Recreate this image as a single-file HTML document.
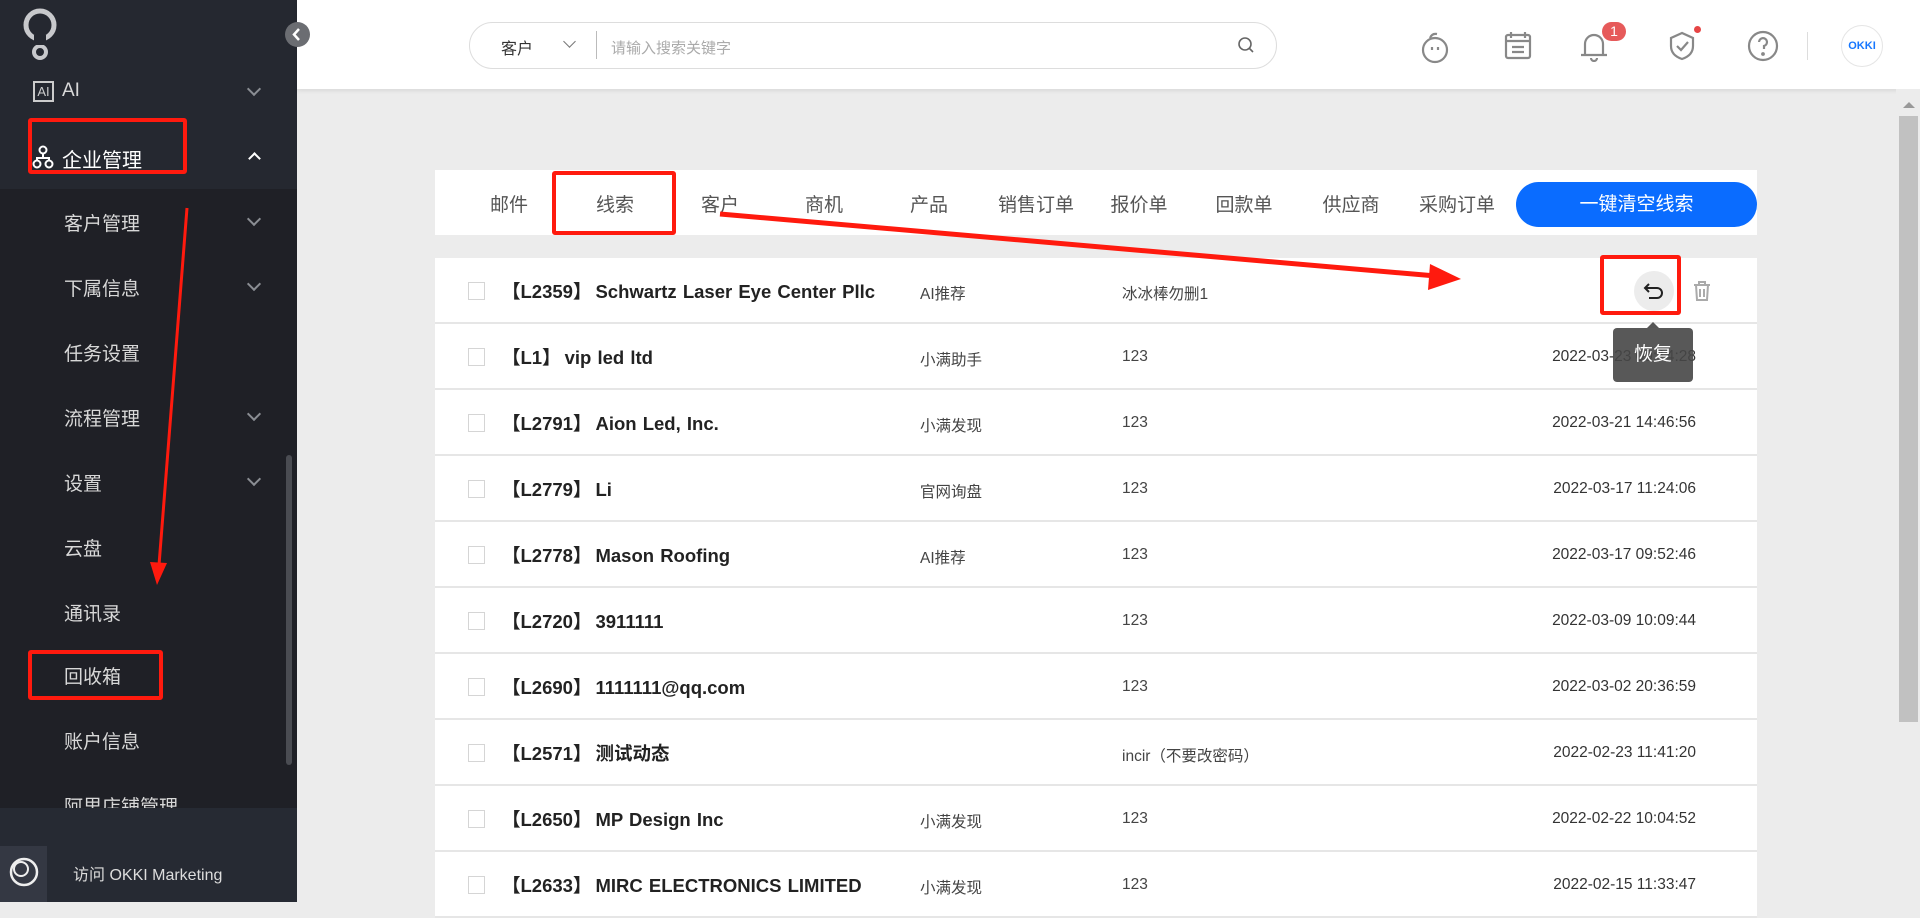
<!DOCTYPE html>
<html><head><meta charset="utf-8"><style>
*{margin:0;padding:0;box-sizing:border-box}
body{width:1920px;height:902px;overflow:hidden;background:#ececec;font-family:"Liberation Sans","Noto Sans CJK SC",sans-serif;position:relative}
.abs{position:absolute}
#side{left:0;top:0;width:297px;height:902px;background:#252830}
#sub{left:0;top:189px;width:297px;height:620px;background:#1f2026}
.mi{position:absolute;color:#d8d8d8;font-size:19px}
.chev{position:absolute;left:249px;width:10px;height:10px;border-right:2px solid #8a8d93;border-bottom:2px solid #8a8d93;transform:rotate(45deg)}
#bottom{left:0;top:808px;width:297px;height:94px;background:#262a33}
#header{left:297px;top:0;width:1623px;height:89px;background:#fff;box-shadow:0 2px 4px rgba(0,0,0,.08)}
.tab{position:absolute;top:190px;font-size:19px;color:#555;transform:translateX(-50%)}
.row{position:absolute;left:435px;width:1322px;height:66px;background:#fff;border-bottom:2px solid #e6e6e6}
.row .cb{position:absolute;left:33px;top:24px;width:17px;height:18px;border:1px solid #d5d5d5;background:#fff}
.row .nm{position:absolute;left:67px;top:20px;font-size:18.5px;font-weight:bold;color:#222;white-space:nowrap;word-spacing:1px}
.row .nm b{margin-right:4px}
.row .src{position:absolute;left:485px;top:24px;font-size:15.5px;color:#444}
.row .own{position:absolute;left:687px;top:24px;font-size:15.5px;color:#444}
.row .dt{position:absolute;right:61px;top:24px;font-size:15.5px;color:#333}
.red{position:absolute;border:4px solid #ff1a0e;border-radius:3px}
</style></head><body>
<div id="side" class="abs"></div>
<div id="sub" class="abs"></div>
<svg class="abs" style="left:20px;top:8px" width="40" height="56"><circle cx="20" cy="17" r="14" fill="none" stroke="#c8c9cc" stroke-width="5"/><circle cx="20" cy="44" r="6" fill="none" stroke="#c8c9cc" stroke-width="4"/><rect x="14" y="27" width="12" height="10" fill="#252830"/></svg>
<div class="abs" style="left:33px;top:81px;width:21px;height:21px;border:2px solid #ccc;color:#ccc;font-size:13px;line-height:17px;text-align:center">AI</div>
<div class="mi" style="left:62px;top:80px">AI</div><div class="chev" style="top:84px"></div>
<svg class="abs" style="left:32px;top:145px" width="22" height="25"><circle cx="11" cy="5" r="3.5" fill="none" stroke="#fff" stroke-width="2"/><circle cx="5" cy="19" r="3.5" fill="none" stroke="#fff" stroke-width="2"/><circle cx="17" cy="19" r="3.5" fill="none" stroke="#fff" stroke-width="2"/><path d="M11 9V13M5 15V13H17V15" stroke="#fff" stroke-width="2" fill="none"/></svg>
<div class="mi" style="left:62px;top:144px;color:#fff;font-size:20px">企业管理</div>
<div class="abs" style="left:250px;top:154px;width:9px;height:9px;border-left:2px solid #fff;border-top:2px solid #fff;transform:rotate(45deg)"></div>
<div class="mi" style="left:64px;top:209px">客户管理</div><div class="chev" style="top:214px"></div>
<div class="mi" style="left:64px;top:274px">下属信息</div><div class="chev" style="top:279px"></div>
<div class="mi" style="left:64px;top:339px">任务设置</div>
<div class="mi" style="left:64px;top:404px">流程管理</div><div class="chev" style="top:409px"></div>
<div class="mi" style="left:64px;top:469px">设置</div><div class="chev" style="top:474px"></div>
<div class="mi" style="left:64px;top:534px">云盘</div>
<div class="mi" style="left:64px;top:599px">通讯录</div>
<div class="mi" style="left:64px;top:662px">回收箱</div>
<div class="mi" style="left:64px;top:727px">账户信息</div>
<div class="mi" style="left:64px;top:792px">阿里店铺管理</div>
<div class="abs" style="left:286px;top:455px;width:6px;height:310px;background:#4a4c52;border-radius:3px"></div>
<div id="bottom" class="abs"></div>
<div class="abs" style="left:0;top:846px;width:47px;height:56px;background:#343843"></div>
<svg class="abs" style="left:8px;top:856px" width="32" height="32"><circle cx="16" cy="16" r="13" fill="none" stroke="#eee" stroke-width="2.5"/><circle cx="13" cy="13" r="7" fill="none" stroke="#eee" stroke-width="2"/></svg>
<div class="abs" style="left:73px;top:861px;color:#ddd;font-size:16px">访问 OKKI Marketing</div>

<div id="header" class="abs"></div>
<div class="abs" style="left:285px;top:22px;width:25px;height:25px;border-radius:50%;background:#6b6d72"></div>
<svg class="abs" style="left:289px;top:26px" width="16" height="17"><path d="M10 3 L5 8.5 L10 14" stroke="#fff" stroke-width="2.5" fill="none"/></svg>
<div class="abs" style="left:469px;top:22px;width:808px;height:47px;border:1px solid #ddd;border-radius:24px;background:#fff"></div>
<div class="abs" style="left:501px;top:35px;font-size:16px;color:#333">客户</div>
<div class="abs" style="left:565px;top:37px;width:9px;height:9px;border-right:1.5px solid #777;border-bottom:1.5px solid #777;transform:rotate(45deg)"></div>
<div class="abs" style="left:596px;top:31px;width:1px;height:28px;background:#bbb"></div>
<div class="abs" style="left:611px;top:37px;font-size:15px;color:#aaa">请输入搜索关键字</div>
<svg class="abs" style="left:1237px;top:36px" width="18" height="18"><circle cx="8" cy="8" r="6" fill="none" stroke="#666" stroke-width="1.6"/><path d="M12.5 12.5L16 16" stroke="#666" stroke-width="1.6"/></svg>
<svg class="abs" style="left:1418px;top:30px" width="34" height="34" fill="none" stroke="#888" stroke-width="2.2"><circle cx="17" cy="20" r="12"/><path d="M12 8 Q14 3 19 4"/><path d="M14 17v3M20 17v3"/></svg>
<svg class="abs" style="left:1502px;top:30px" width="32" height="32" fill="none" stroke="#888" stroke-width="2.2"><rect x="4" y="5" width="24" height="23" rx="2"/><path d="M9 2v6M23 2v6M4 11h24M10 17h12M10 22h12"/></svg>
<svg class="abs" style="left:1578px;top:30px" width="32" height="32" fill="none" stroke="#888" stroke-width="2.2"><path d="M7 24V14a9 9 0 0 1 18 0v10M3 25h26M13 28a3 3 0 0 0 6 0"/></svg>
<div class="abs" style="left:1602px;top:22px;width:24px;height:19px;border-radius:10px;background:#e65a5a;color:#fff;font-size:14px;text-align:center;line-height:19px">1</div>
<svg class="abs" style="left:1666px;top:30px" width="32" height="32" fill="none" stroke="#888" stroke-width="2.2"><path d="M16 3L5 8v8c0 7 5 11 11 13 6-2 11-6 11-13V8z"/><path d="M11 16l4 4 7-8"/></svg>
<div class="abs" style="left:1694px;top:26px;width:7px;height:7px;border-radius:50%;background:#e64545"></div>
<svg class="abs" style="left:1746px;top:29px" width="34" height="34" fill="none" stroke="#888" stroke-width="2.2"><circle cx="17" cy="17" r="14"/><path d="M13 13a4 4 0 1 1 5 4v3"/><circle cx="17" cy="25" r="0.8" fill="#888"/></svg>
<div class="abs" style="left:1807px;top:32px;width:1px;height:28px;background:#ddd"></div>
<div class="abs" style="left:1841px;top:25px;width:42px;height:42px;border-radius:50%;border:1px solid #e5e5e5;color:#1677ff;font-size:11px;font-weight:bold;text-align:center;line-height:40px">OKKI</div>

<div class="abs" style="left:1896px;top:89px;width:24px;height:813px;background:#ececec"></div>
<div class="abs" style="left:1903px;top:102px;width:0;height:0;border-left:6px solid transparent;border-right:6px solid transparent;border-bottom:6px solid #999"></div>
<div class="abs" style="left:1899px;top:116px;width:19px;height:606px;background:#c1c1c1"></div>

<div class="abs" style="left:435px;top:170px;width:1322px;height:65px;background:#fff"></div>
<div class="tab" style="left:509px">邮件</div>
<div class="tab" style="left:615px">线索</div>
<div class="tab" style="left:720px">客户</div>
<div class="tab" style="left:824px">商机</div>
<div class="tab" style="left:929px">产品</div>
<div class="tab" style="left:1036px">销售订单</div>
<div class="tab" style="left:1139px">报价单</div>
<div class="tab" style="left:1244px">回款单</div>
<div class="tab" style="left:1351px">供应商</div>
<div class="tab" style="left:1457px">采购订单</div>
<div class="abs" style="left:1516px;top:182px;width:241px;height:45px;border-radius:23px;background:#0a6cff;color:#fff;font-size:19px;text-align:center;line-height:45px">一键清空线索</div>

<div class="row" style="top:258px"><div class="cb"></div><div class="nm"><b>【L2359】</b>Schwartz Laser Eye Center Pllc</div><div class="src">AI推荐</div><div class="own">冰冰棒勿删1</div></div>
<div class="row" style="top:324px"><div class="cb"></div><div class="nm"><b>【L1】</b>vip led ltd</div><div class="src">小满助手</div><div class="own">123</div><div class="dt">2022-03-23 09:14:28</div></div>
<div class="row" style="top:390px"><div class="cb"></div><div class="nm"><b>【L2791】</b>Aion Led, Inc.</div><div class="src">小满发现</div><div class="own">123</div><div class="dt">2022-03-21 14:46:56</div></div>
<div class="row" style="top:456px"><div class="cb"></div><div class="nm"><b>【L2779】</b>Li</div><div class="src">官网询盘</div><div class="own">123</div><div class="dt">2022-03-17 11:24:06</div></div>
<div class="row" style="top:522px"><div class="cb"></div><div class="nm"><b>【L2778】</b>Mason Roofing</div><div class="src">AI推荐</div><div class="own">123</div><div class="dt">2022-03-17 09:52:46</div></div>
<div class="row" style="top:588px"><div class="cb"></div><div class="nm"><b>【L2720】</b>3911111</div><div class="own">123</div><div class="dt">2022-03-09 10:09:44</div></div>
<div class="row" style="top:654px"><div class="cb"></div><div class="nm"><b>【L2690】</b>1111111@qq.com</div><div class="own">123</div><div class="dt">2022-03-02 20:36:59</div></div>
<div class="row" style="top:720px"><div class="cb"></div><div class="nm"><b>【L2571】</b>测试动态</div><div class="own">incir（不要改密码）</div><div class="dt">2022-02-23 11:41:20</div></div>
<div class="row" style="top:786px"><div class="cb"></div><div class="nm"><b>【L2650】</b>MP Design Inc</div><div class="src">小满发现</div><div class="own">123</div><div class="dt">2022-02-22 10:04:52</div></div>
<div class="row" style="top:852px"><div class="cb"></div><div class="nm"><b>【L2633】</b>MIRC ELECTRONICS LIMITED</div><div class="src">小满发现</div><div class="own">123</div><div class="dt">2022-02-15 11:33:47</div></div>

<div class="abs" style="left:1634px;top:271px;width:40px;height:40px;border-radius:50%;background:#ececec"></div>
<svg class="abs" style="left:1642px;top:279px" width="24" height="24" fill="none" stroke="#222" stroke-width="2"><path d="M7 5L3 9l4 4"/><path d="M3 9h12a5 5 0 0 1 0 10H7"/></svg>
<svg class="abs" style="left:1692px;top:280px" width="20" height="22" fill="none" stroke="#aaa" stroke-width="2"><path d="M2 5h16M7 5V2h6v3M4 5l1 15h10l1-15M8 9v8M12 9v8"/></svg>
<div class="abs" style="left:1647px;top:322px;width:0;height:0;border-left:6px solid transparent;border-right:6px solid transparent;border-bottom:6px solid #555"></div>
<div class="abs" style="left:1613px;top:328px;width:80px;height:54px;background:rgba(70,70,70,.9);border-radius:4px;color:#fff;font-size:19px;text-align:center;line-height:54px">恢复</div>

<div class="red" style="left:28px;top:118px;width:159px;height:56px"></div>
<div class="red" style="left:552px;top:171px;width:124px;height:64px"></div>
<div class="red" style="left:1600px;top:255px;width:81px;height:60px"></div>
<div class="red" style="left:28px;top:650px;width:135px;height:50px"></div>
<svg class="abs" style="left:0;top:0" width="1920" height="902" fill="#ff1a0e"><path d="M187 208L159 565" stroke="#ff1a0e" stroke-width="3"/><path d="M150 562L157 585L167 563Z"/><path d="M720 214L1436 276" stroke="#ff1a0e" stroke-width="5"/><path d="M1430 264L1461 279L1428 290Z"/></svg>
</body></html>
